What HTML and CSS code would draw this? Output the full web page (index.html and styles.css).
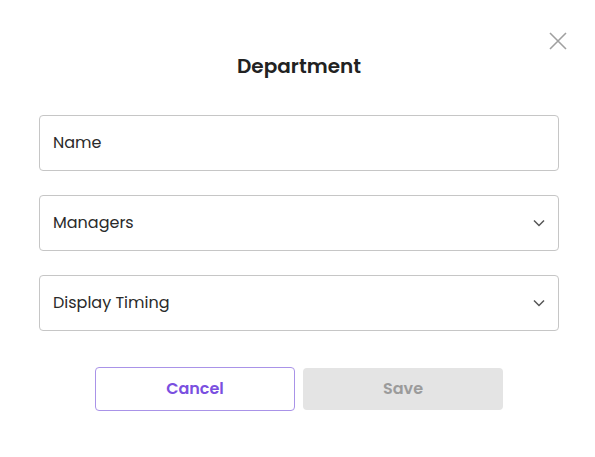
FILE: index.html
```html
<!DOCTYPE html>
<html>
<head>
<meta charset="utf-8">
<link rel="stylesheet" href="styles.css">
</head>
<body>
<div class="dialog">
  <button class="close" aria-label="Close">
    <svg width="18" height="18" viewBox="0 0 18 18"><path d="M1 1L17 17M17 1L1 17" stroke="#a0a0a0" stroke-width="1.6" fill="none"/></svg>
  </button>
  <h2 class="title">Department</h2>
  <div class="fields">
    <div class="field"><span>Name</span></div>
    <div class="field select"><span>Managers</span>
      <svg class="chev" width="12" height="8" viewBox="0 0 12 8"><path d="M1 1.5L6 6.5L11 1.5" stroke="#555" stroke-width="1.5" fill="none"/></svg>
    </div>
    <div class="field select"><span>Display Timing</span>
      <svg class="chev" width="12" height="8" viewBox="0 0 12 8"><path d="M1 1.5L6 6.5L11 1.5" stroke="#555" stroke-width="1.5" fill="none"/></svg>
    </div>
  </div>
  <div class="actions">
    <button class="btn cancel">Cancel</button>
    <button class="btn save">Save</button>
  </div>
</div>
</body>
</html>
```
FILE: styles.css
```css
* { box-sizing: border-box; }
html, body { margin: 0; padding: 0; background: #fff; }
body {
  font-family: "Poppins", "Inter", "Noto Sans", sans-serif;
  color: #222;
  width: 595px;
  height: 457px;
}
.dialog {
  position: relative;
  padding: 51px 36px 0 39px;
}
.close {
  position: absolute;
  top: 31px;
  left: 548px;
  width: 20px;
  height: 20px;
  padding: 0;
  border: 0;
  background: none;
  display: flex;
  align-items: center;
  justify-content: center;
}
.title {
  margin: 0;
  text-align: center;
  font-size: 20px;
  font-weight: 600;
  line-height: 30px;
  color: #222;
  width: 520px;
}
.fields {
  margin-top: 34px;
  width: 520px;
  display: flex;
  flex-direction: column;
  gap: 24px;
}
.field {
  height: 56px;
  border: 1px solid #c6c6c6;
  border-radius: 4px;
  padding: 0 13px 2px;
  display: flex;
  align-items: center;
  justify-content: space-between;
  font-size: 16px;
  color: #2a2a2a;
}
.chev { margin-top: 2px; }
.actions {
  margin-top: 36px;
  display: flex;
  justify-content: center;
  gap: 8px;
  width: 520px;
  align-items: center;
}
.btn {
  width: 200px;
  font-family: inherit;
  font-size: 16px;
  font-weight: 600;
  border-radius: 4px;
  padding: 0 0 2px;
}
.cancel {
  height: 44px;
  background: #fff;
  border: 1px solid #a993e8;
  color: #7a4fe0;
}
.save {
  height: 42px;
  background: #e4e4e4;
  border: 0;
  color: #9b9b9b;
}
```
